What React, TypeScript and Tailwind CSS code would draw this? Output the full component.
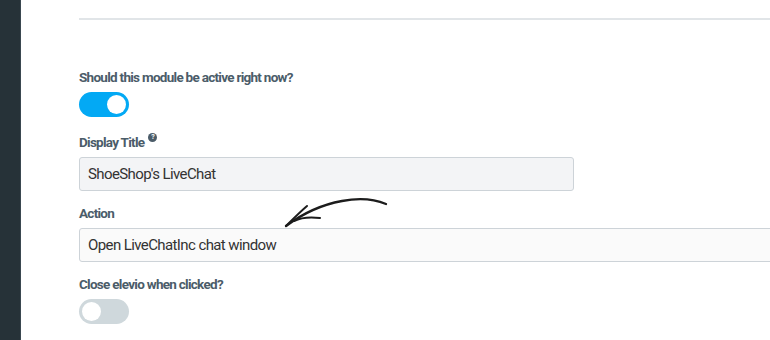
import React, { useState } from 'react';

function Toggle({ on, onChange }: { on: boolean; onChange: () => void }) {
  return (
    <button
      type="button"
      onClick={onChange}
      className={`relative flex h-[25px] w-[50px] items-center rounded-full px-[3px] transition-colors ${
        on ? 'justify-end bg-[#03a9f4]' : 'justify-start bg-[#cfd8dc]'
      }`}
    >
      <span className="block h-[19px] w-[19px] rounded-full bg-white" />
    </button>
  );
}

function Label({ children }: { children: React.ReactNode }) {
  return (
    <div className="mb-[7px] flex h-4 items-center text-[13.5px] font-bold leading-4 tracking-[-0.72px] text-[#4b5c69]">
      {children}
    </div>
  );
}

export default function App() {
  const [active, setActive] = useState(true);
  const [closeOnClick, setCloseOnClick] = useState(false);
  const [title, setTitle] = useState("ShoeShop's LiveChat");

  return (
    <div
      className="flex h-[340px] w-full overflow-hidden bg-white"
      style={{ fontFamily: 'Roboto, "Liberation Sans", sans-serif' }}
    >
      {/* Sidebar */}
      <div className="w-[21px] shrink-0 border-r border-[#3a4750] bg-[#263238]" />

      <div className="flex flex-1 flex-col pl-[58px]">
        <div className="mt-[18px] h-[2px] bg-[#e1e5e8]" />

        <div className="mt-[49px]">
          <Label>Should this module be active right now?</Label>
          <Toggle on={active} onChange={() => setActive(!active)} />
        </div>

        <div className="mt-[17px]">
          <Label>
            Display Title
            <span className="relative -top-[5px] ml-[4px] flex h-[9px] w-[9px] items-center justify-center rounded-full bg-[#4b5c69] text-[7px] font-bold leading-none tracking-normal text-white">
              ?
            </span>
          </Label>
          <input
            value={title}
            onChange={e => setTitle(e.target.value)}
            className="h-[34px] w-[495px] rounded-[3px] border border-[#cdd3d8] bg-[#f3f4f6] px-[8px] text-[15px] tracking-[-0.6px] text-[#333] outline-none"
          />
        </div>

        <div className="relative mt-[14px]">
          <Label>Action</Label>
          <div className="flex h-[34px] w-[720px] items-center rounded-[3px] border border-[#cdd3d8] bg-[#fafafa] px-[8px] text-[15px] tracking-[-0.6px] text-[#333]">
            Open LiveChatInc chat window
          </div>
          {/* hand drawn arrow */}
          <svg
            className="absolute left-[203px] top-[-13px]"
            width="110"
            height="36"
            viewBox="0 0 110 36"
            fill="none"
          >
            <path
              d="M4 34 C 20 22, 38 13, 60 9 C 76 6, 92 7, 104 12"
              stroke="#1c1c1c"
              strokeWidth="2.3"
              strokeLinecap="round"
            />
            <path d="M4 34 C 12 26, 18 20, 25 14" stroke="#1c1c1c" strokeWidth="2" strokeLinecap="round" />
            <path d="M12 29 C 20 25, 30 25, 38 26" stroke="#1c1c1c" strokeWidth="2" strokeLinecap="round" />
          </svg>
        </div>

        <div className="mt-[14px]">
          <Label>Close elevio when clicked?</Label>
          <Toggle on={closeOnClick} onChange={() => setCloseOnClick(!closeOnClick)} />
        </div>
      </div>
    </div>
  );
}
